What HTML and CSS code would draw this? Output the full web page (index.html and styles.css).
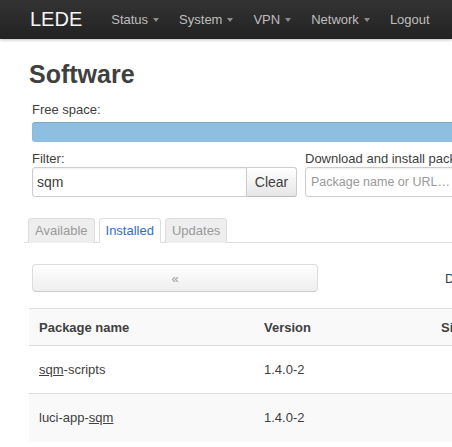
FILE: index.html
```html
<!DOCTYPE html>
<html lang="en">
<head>
  <meta charset="UTF-8">
  <meta name="viewport" content="width=device-width, initial-scale=1.0">
  <title>Software - LEDE</title>
  <link rel="stylesheet" href="styles.css">
</head>
<body>
  <div class="navbar">
    <a class="brand" href="#">LEDE</a>
    <ul class="nav">
      <li class="dropdown">Status<span class="caret"></span></li>
      <li class="dropdown">System<span class="caret"></span></li>
      <li class="dropdown">VPN<span class="caret"></span></li>
      <li class="dropdown">Network<span class="caret"></span></li>
      <li>Logout</li>
    </ul>
  </div>

  <div class="main">
    <h2 class="title">Software</h2>

    <div class="section">
      <div class="label">Free space:</div>
      <div class="progress"></div>

      <div class="controls">
        <div class="filter">
          <div class="label">Filter:</div>
          <div class="input-group">
            <input type="text" class="text-input" value="sqm">
            <button class="btn btn-attached">Clear</button>
          </div>
        </div>
        <div class="install">
          <div class="label">Download and install package:</div>
          <input type="text" class="text-input wide" placeholder="Package name or URL…">
        </div>
      </div>
    </div>

    <ul class="tabs">
      <li>Available</li>
      <li class="active">Installed</li>
      <li>Updates</li>
    </ul>

    <div class="pager">
      <button class="btn pager-btn">&laquo;</button>
      <div class="pager-text">Displaying 1-2 of 2</div>
    </div>

    <table class="pkg-table">
      <tr class="head">
        <th class="col-name">Package name</th>
        <th class="col-version">Version</th>
        <th>Size (.ipk)</th>
      </tr>
      <tr>
        <td><u>sqm</u>-scripts</td>
        <td>1.4.0-2</td>
        <td></td>
      </tr>
      <tr class="odd">
        <td>luci-app-<u>sqm</u></td>
        <td>1.4.0-2</td>
        <td></td>
      </tr>
    </table>
  </div>
</body>
</html>
```

FILE: styles.css
```css
html, body{
  margin: 0;
  overflow: hidden;
}

body{
  font-family: "Liberation Sans", Arial, sans-serif;
  font-size: 13px;
  color: #404040;
}

/* top bar */
.navbar{
  height: 39px;
  display: flex;
  align-items: center;
  padding-left: 30px;
  background: linear-gradient(#333333, #222222);
  box-shadow: 0 1px 3px rgba(0, 0, 0, 0.25);
}

.brand{
  font-size: 20px;
  color: #f5f5f5;
  text-decoration: none;
  margin-right: 19px;
  margin-top: -1px;
}

.nav{
  display: flex;
  margin: 0;
  padding: 0;
  list-style: none;
}

.nav li{
  padding: 0 10px;
  color: #bfbfbf;
  display: flex;
  align-items: center;
}

.caret{
  width: 0;
  height: 0;
  margin-left: 5px;
  margin-top: 1px;
  border-left: 3.5px solid transparent;
  border-right: 3.5px solid transparent;
  border-top: 4px solid #8c8c8c;
}

/* page */
.main{
  width: 1000px;
  padding-left: 24px;
}

.title{
  font-size: 25px;
  line-height: 30px;
  margin: 20px 0 0 5px;
  color: #404040;
}

.section{
  padding-left: 8px;
}

.label{
  line-height: 16px;
}

.section > .label{
  margin-top: 12px;
  line-height: 18px;
}

.progress{
  height: 20px;
  margin-top: 3px;
  border-radius: 3px;
  background: #8ebfe0;
  box-shadow: inset 0 1px 1px rgba(0, 0, 0, 0.12);
}

.controls{
  display: flex;
  gap: 8px;
  margin-top: 9px;
}

.filter{
  width: 265px;
}

.install{
  flex: 1;
}

.input-group{
  display: flex;
}

.text-input{
  box-sizing: border-box;
  height: 30px;
  padding: 0 4px;
  border: 1px solid #cccccc;
  border-radius: 3px;
  font-family: inherit;
  font-size: 14px;
  color: #404040;
  box-shadow: inset 0 1px 2px rgba(0, 0, 0, 0.06);
}

.input-group .text-input{
  width: 215px;
  border-radius: 3px 0 0 3px;
}

.text-input.wide{
  width: 420px;
  padding-left: 5px;
  font-size: 12.5px;
}

.text-input::placeholder{
  color: #999999;
}

.btn{
  font-family: inherit;
  color: #404040;
  border: 1px solid #cccccc;
  border-bottom-color: #bbbbbb;
  background: linear-gradient(#ffffff, #e6e6e6);
  border-radius: 4px;
  cursor: pointer;
}

.btn-attached{
  width: 50px;
  height: 30px;
  font-size: 14px;
  border-left: none;
  border-radius: 0 3px 3px 0;
  padding: 0;
}

/* tabs */
.tabs{
  display: flex;
  gap: 4px;
  margin: 21px 0 0;
  padding: 0 0 0 4px;
  list-style: none;
  border-bottom: 1px solid #dddddd;
}

.tabs li{
  box-sizing: border-box;
  height: 25px;
  line-height: 24px;
  padding: 0 6px;
  margin-bottom: -1px;
  border: 1px solid #dddddd;
  border-bottom: none;
  border-radius: 4px 4px 0 0;
  background: #eeeeee;
  color: #999999;
}

.tabs li.active{
  background: #ffffff;
  color: #2f6fc3;
  border-bottom: 1px solid #ffffff;
}

/* pager */
.pager{
  display: flex;
  align-items: center;
  margin: 21px 0 0 8px;
}

.pager-btn{
  width: 286px;
  height: 28px;
  font-size: 13px;
  color: #999999;
  border-color: #dddddd;
  border-bottom-color: #cccccc;
  background: linear-gradient(#ffffff, #eeeeee);
}

.pager-text{
  margin-left: 127px;
}

/* table */
.pkg-table{
  margin: 16px 0 0 5px;
  width: 700px;
  border-collapse: collapse;
  text-align: left;
}

.pkg-table th,
.pkg-table td{
  padding: 0 10px;
  border-top: 1px solid #dddddd;
}

.pkg-table .head{
  height: 37px;
  background: #f9f9f9;
}

.pkg-table tr{
  height: 48px;
}

.pkg-table tr.odd{
  background: #f9f9f9;
}

.col-name{
  width: 205px;
}

.col-version{
  width: 157px;
}

.pkg-table u{
  text-decoration-color: #404040;
}
```
